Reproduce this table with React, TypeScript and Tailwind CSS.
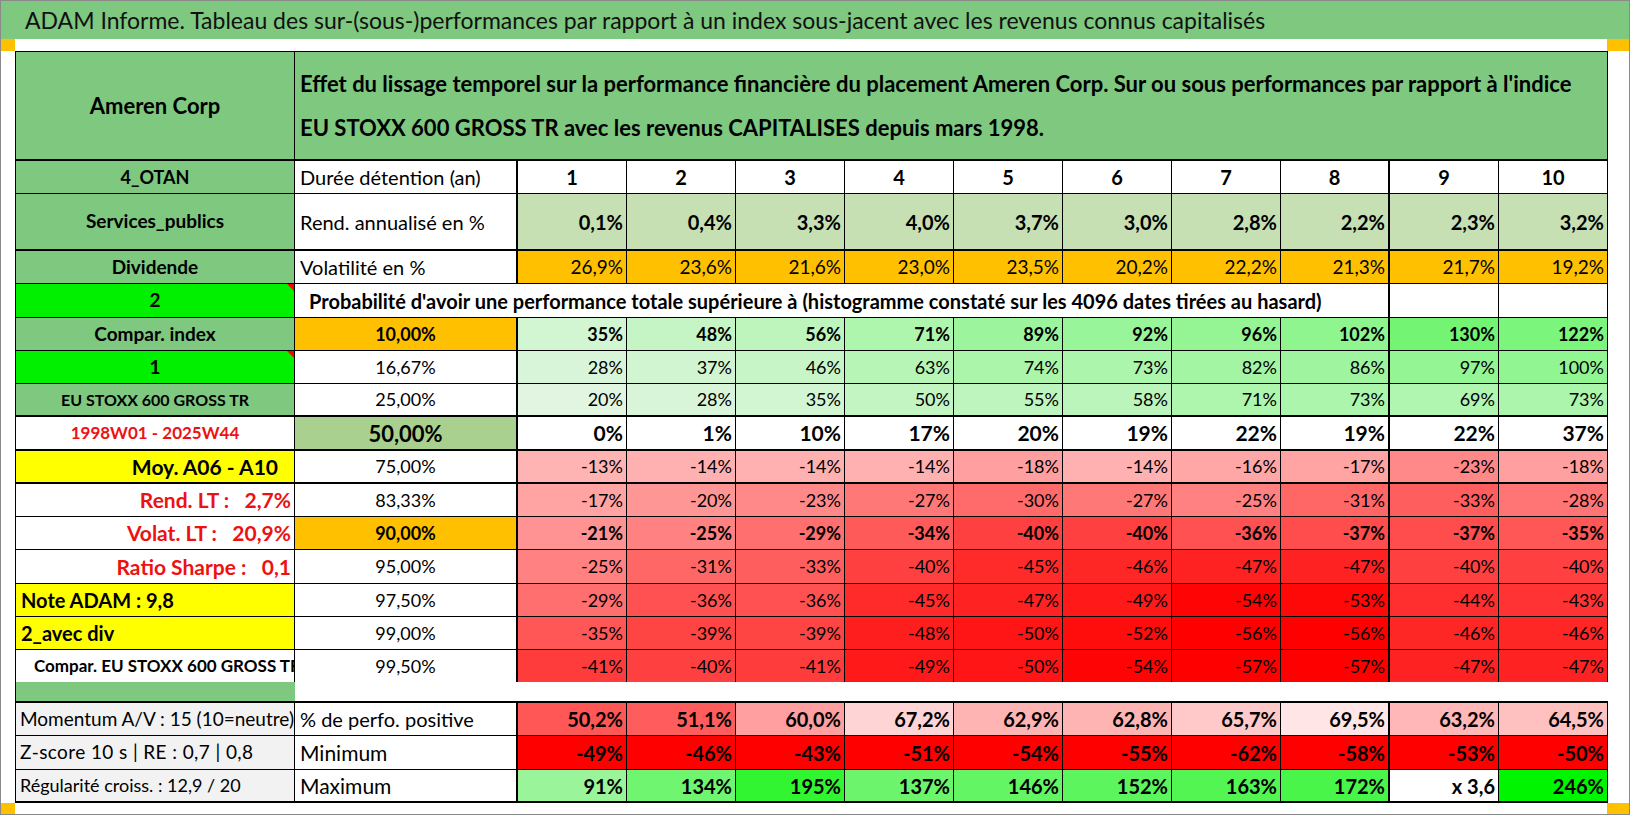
import React from "react";

const bCls = { 0: "border-b-0", 1: "border-b", 2: "border-b-2" } as const;
const rCls = { 0: "border-r-0", 1: "border-r", 2: "border-r-2" } as const;

type CellProps = {
  children?: React.ReactNode;
  className?: string;
  style?: React.CSSProperties;
  b?: 0 | 1 | 2;
  r?: 0 | 1 | 2;
};

function Cell({ children, className = "", style, b = 1, r = 1 }: CellProps) {
  return (
    <div
      className={`relative flex items-center overflow-hidden whitespace-nowrap border-black ${bCls[b]} ${rCls[r]} ${className}`}
      style={style}
    >
      {children}
    </div>
  );
}

// comment marker in the corner of a cell
function Flag() {
  return <span className="absolute right-0 top-0 h-0 w-0 border-l-[7px] border-t-[7px] border-l-transparent border-t-[#ff0000]" />;
}

const red = (v: number) => {
  const c = Math.max(0, Math.round(236 - 4.3 * Math.abs(v)));
  return `rgb(255,${c},${c})`;
};
const green = (v: number) => {
  const c = Math.max(0, Math.round(245 - v));
  return `rgb(${c},245,${c})`;
};
const pink = (v: number) => {
  const c = Math.min(235, Math.round(85 + (v - 50) * 7.4));
  return `rgb(255,${c},${c})`;
};

const years = [1, 2, 3, 4, 5, 6, 7, 8, 9, 10];
const rend = ["0,1%", "0,4%", "3,3%", "4,0%", "3,7%", "3,0%", "2,8%", "2,2%", "2,3%", "3,2%"];
const vol = ["26,9%", "23,6%", "21,6%", "23,0%", "23,5%", "20,2%", "22,2%", "21,3%", "21,7%", "19,2%"];

const quantiles: { label: string; vals: number[] }[] = [
  { label: "10,00%", vals: [35, 48, 56, 71, 89, 92, 96, 102, 130, 122] },
  { label: "16,67%", vals: [28, 37, 46, 63, 74, 73, 82, 86, 97, 100] },
  { label: "25,00%", vals: [20, 28, 35, 50, 55, 58, 71, 73, 69, 73] },
  { label: "50,00%", vals: [0, 1, 10, 17, 20, 19, 22, 19, 22, 37] },
  { label: "75,00%", vals: [-13, -14, -14, -14, -18, -14, -16, -17, -23, -18] },
  { label: "83,33%", vals: [-17, -20, -23, -27, -30, -27, -25, -31, -33, -28] },
  { label: "90,00%", vals: [-21, -25, -29, -34, -40, -40, -36, -37, -37, -35] },
  { label: "95,00%", vals: [-25, -31, -33, -40, -45, -46, -47, -47, -40, -40] },
  { label: "97,50%", vals: [-29, -36, -36, -45, -47, -49, -54, -53, -44, -43] },
  { label: "99,00%", vals: [-35, -39, -39, -48, -50, -52, -56, -56, -46, -46] },
  { label: "99,50%", vals: [-41, -40, -41, -49, -50, -54, -57, -57, -47, -47] },
];

const positive = [50.2, 51.1, 60.0, 67.2, 62.9, 62.8, 65.7, 69.5, 63.2, 64.5];
const minimum = [-49, -46, -43, -51, -54, -55, -62, -58, -53, -50];
const maximum = [91, 134, 195, 137, 146, 152, 163, 172, null, 246];

const fmt1 = (v: number) => v.toFixed(1).replace(".", ",") + "%";

// left column of the quantile block
const side: { text: string; className: string; flag?: boolean; b?: 0 | 1 | 2 }[] = [
  { text: "Compar. index", className: "bg-[#7ec880] justify-center font-bold text-[19px]" },
  { text: "1", className: "bg-[#00f000] justify-center font-bold text-[19px]", flag: true },
  { text: "EU STOXX 600 GROSS TR", className: "bg-[#7ec880] justify-center font-bold text-[16px]", b: 2 },
  { text: "1998W01 - 2025W44", className: "justify-center font-bold text-[17px] text-[#ee1111]", b: 2 },
  { text: "Moy. A06 - A10", className: "bg-[#ffff00] justify-end pr-[16px] font-bold text-[21px]", b: 2 },
  { text: "Rend. LT :   2,7%", className: "justify-end pr-[3px] font-bold text-[21px] text-[#ee1111]" },
  { text: "Volat. LT :   20,9%", className: "justify-end pr-[3px] font-bold text-[21px] text-[#ee1111]" },
  { text: "Ratio Sharpe :   0,1", className: "justify-end pr-[3px] font-bold text-[21px] text-[#ee1111]" },
  { text: "Note ADAM : 9,8", className: "bg-[#ffff00] pl-[5px] font-bold text-[20px]" },
  { text: "2_avec div", className: "bg-[#ffff00] pl-[5px] font-bold text-[20px]" },
  { text: "Compar. EU STOXX 600 GROSS TR", className: "pl-[18px] font-bold text-[17px]", b: 0 },
];

const midCls = [
  "bg-[#ffc000] font-bold text-[18px]",
  "text-[18px]",
  "text-[18px]",
  "bg-[#a9d08e] font-bold text-[22px]",
  "text-[18px]",
  "text-[18px]",
  "bg-[#ffc000] font-bold text-[18px]",
  "text-[18px]",
  "text-[18px]",
  "text-[18px]",
  "text-[18px]",
];

export default function App() {
  return (
    <div className="flex h-[815px] w-[1630px] flex-col overflow-hidden border border-[#8a8a8a] bg-white font-['Lato','Liberation_Sans',sans-serif] text-black">
      <div className="flex h-[40px] items-center bg-[#7ec880] pl-[24px] text-[23px] text-[#111]">
        ADAM Informe. Tableau des sur-(sous-)performances par rapport à un index sous-jacent avec les revenus connus capitalisés
      </div>
      <div className="flex h-[12px] justify-between">
        <div className="w-[14px] bg-[#ffc000]" />
        <div className="w-[22px] bg-[#ffc000]" />
      </div>

      <div className="pl-[14px]">
        <div className="grid w-fit grid-cols-[279px_223px_repeat(10,109px)] grid-rows-[109px_33px_57px_33px_34px_33px_33px_33px_34px_33px_33px_33px_34px_33px_33px_32px_21px_33px_34px_33px] border-l border-t border-black">
          {/* header */}
          <Cell b={2} className="justify-center bg-[#7ec880] text-[22px] font-bold">
            Ameren Corp
          </Cell>
          <Cell b={2} className="col-span-11 flex-col !items-start justify-center bg-[#7ec880] pl-[5px] text-[22px] font-bold leading-[44px]">
            <span>
              Effet du lissage temporel sur la performance financière du placement Ameren Corp. Sur ou sous performances par rapport à l'indice
            </span>
            <span>EU STOXX 600 GROSS TR avec les revenus CAPITALISES depuis mars 1998.</span>
          </Cell>

          {/* durée */}
          <Cell className="justify-center bg-[#7ec880] text-[18px] font-bold">4_OTAN</Cell>
          <Cell r={2} className="pl-[5px] text-[20px]">Durée détention (an)</Cell>
          {years.map((y) => (
            <Cell key={y} r={y === 8 ? 2 : 1} className="justify-center text-[20px] font-bold">
              {y}
            </Cell>
          ))}

          {/* rendement */}
          <Cell b={2} className="justify-center bg-[#7ec880] text-[19px] font-bold">Services_publics</Cell>
          <Cell b={2} r={2} className="pl-[5px] text-[20px]">Rend. annualisé en %</Cell>
          {rend.map((v, i) => (
            <Cell key={i} b={2} r={i === 7 ? 2 : 1} className="justify-end bg-[#c6e0b4] pr-[3px] text-[20px] font-bold">
              {v}
            </Cell>
          ))}

          {/* volatilité */}
          <Cell className="justify-center bg-[#7ec880] text-[19px] font-bold">Dividende</Cell>
          <Cell r={2} className="pl-[5px] text-[20px]">Volatilité en %</Cell>
          {vol.map((v, i) => (
            <Cell key={i} r={i === 7 ? 2 : 1} className="justify-end bg-[#ffc000] pr-[3px] text-[19px]">
              {v}
            </Cell>
          ))}

          {/* probabilité */}
          <Cell className="justify-center bg-[#00f000] text-[19px] font-bold">
            2
            <Flag />
          </Cell>
          <Cell r={2} className="col-span-9 pl-[14px] text-[20px] font-bold">
            Probabilité d'avoir une performance totale supérieure à (histogramme constaté sur les 4096 dates tirées au hasard)
          </Cell>
          <Cell />
          <Cell />

          {quantiles.map((q, qi) => {
            const s = side[qi];
            const last = qi === quantiles.length - 1;
            const rowB = s.b ?? 1;
            const bold = qi === 0 || qi === 6;
            const mid = qi === 3;
            return (
              <React.Fragment key={q.label}>
                <Cell b={rowB} className={`whitespace-pre ${s.className}`}>
                  {s.text}
                  {s.flag && <Flag />}
                </Cell>
                <Cell b={rowB} r={2} className={`justify-center ${midCls[qi]}`}>
                  {q.label}
                </Cell>
                {q.vals.map((v, i) => (
                  <Cell
                    key={i}
                    b={last ? 0 : rowB}
                    r={i === 7 ? 2 : 1}
                    className={`justify-end pr-[3px] ${mid ? "text-[21px] font-bold" : bold ? "text-[18px] font-bold" : "text-[18px]"}`}
                    style={{ background: mid ? "#fff" : v >= 0 ? green(v) : red(v) }}
                  >
                    {v}%
                  </Cell>
                ))}
              </React.Fragment>
            );
          })}

          {/* spacer row */}
          <Cell b={2} r={0} className="bg-[#7ec880]" />
          <Cell b={2} r={0} className="col-span-11" />

          {/* momentum block */}
          <Cell className="bg-[#f2f2f2] pl-[4px] text-[19px]">Momentum A/V : 15 (10=neutre)</Cell>
          <Cell r={2} className="pl-[5px] text-[20px]">% de perfo. positive</Cell>
          {positive.map((v, i) => (
            <Cell key={i} r={i === 7 ? 2 : 1} className="justify-end pr-[3px] text-[20px] font-bold" style={{ background: pink(v) }}>
              {fmt1(v)}
            </Cell>
          ))}

          <Cell className="bg-[#f2f2f2] pl-[4px] text-[19px] tracking-[0.4px]">Z-score 10 s | RE : 0,7 | 0,8</Cell>
          <Cell r={2} className="pl-[5px] text-[21px]">Minimum</Cell>
          {minimum.map((v, i) => (
            <Cell key={i} r={i === 7 ? 2 : 1} className="justify-end bg-[#ff0000] pr-[3px] text-[20px] font-bold">
              {v}%
            </Cell>
          ))}

          <Cell b={2} className="bg-[#f2f2f2] pl-[4px] text-[18px]">Régularité croiss. : 12,9 / 20</Cell>
          <Cell b={2} r={2} className="pl-[5px] text-[21px]">Maximum</Cell>
          {maximum.map((v, i) => (
            <Cell
              key={i}
              b={2}
              r={i === 7 ? 2 : 1}
              className="justify-end pr-[3px] text-[20px] font-bold"
              style={{ background: v === null ? "#fff" : green(v) }}
            >
              {v === null ? "x 3,6" : `${v}%`}
            </Cell>
          ))}
        </div>
      </div>

      <div className="flex flex-1 items-end justify-between">
        <div className="h-[11px] w-[14px] bg-[#ffc000]" />
        <div className="h-[11px] w-[22px] bg-[#ffc000]" />
      </div>
    </div>
  );
}
